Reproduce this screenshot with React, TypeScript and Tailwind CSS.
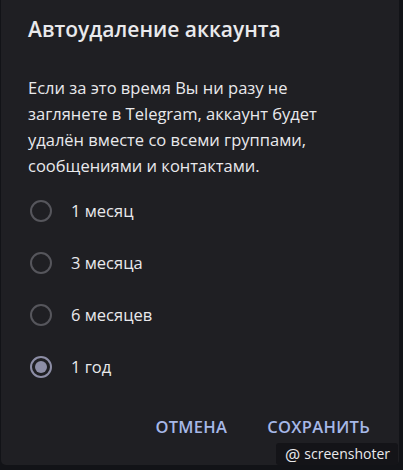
const OPTIONS = ["1 месяц", "3 месяца", "6 месяцев", "1 год"];

function Radio({ checked }: { checked: boolean }) {
  return (
    <span
      className={
        "flex h-[22px] w-[22px] items-center justify-center rounded-full border-2 " +
        (checked ? "border-[#8d8ea6]" : "border-[#56565c]")
      }
    >
      {checked && <span className="h-[12px] w-[12px] rounded-full bg-[#8d8ea6]" />}
    </span>
  );
}

export default function App() {
  return (
    <div
      className="h-[470px] w-[403px] bg-[#121317] pl-[1px]"
      style={{ fontFamily: '"Open Sans", "Noto Sans", sans-serif' }}
    >
      <div className="relative flex h-[465px] w-[398px] flex-col rounded-b-[5px] bg-[#1f1f23] text-[#e9e9ec]">
        <h1 className="px-[27px] pt-[13px] text-[21px] font-semibold leading-[32px]">Автоудаление аккаунта</h1>
        <p className="mt-[30px] w-[350px] pl-[27px] text-[16.5px] leading-[26px]">
          Если за это время Вы ни разу не заглянете в Telegram, аккаунт будет удалён вместе со всеми группами,
          сообщениями и контактами.
        </p>
        <div className="mt-[6px] flex flex-col">
          {OPTIONS.map((o, i) => (
            <label key={o} className="flex h-[52px] items-center gap-[19px] px-[29px]">
              <Radio checked={i === 3} />
              <span className="text-[16.5px]">{o}</span>
            </label>
          ))}
        </div>
        <div className="mt-[22px] flex justify-end gap-[40px] pr-[29px]">
          <button className="text-[16.5px] font-semibold tracking-[0.3px] text-[#a6b8e8]">ОТМЕНА</button>
          <button className="text-[16.5px] font-semibold tracking-[0.3px] text-[#a6b8e8]">СОХРАНИТЬ</button>
        </div>
        <div className="absolute right-[1px] bottom-[0px] flex h-[22px] items-center gap-[4px] rounded-[3px] bg-[#141418] pr-[8px] pl-[9px] text-[14px] text-[#e9e9ec]">
          <span className="text-[17px] leading-none">@</span>
          <span className="leading-none">screenshoter</span>
        </div>
      </div>
    </div>
  );
}
